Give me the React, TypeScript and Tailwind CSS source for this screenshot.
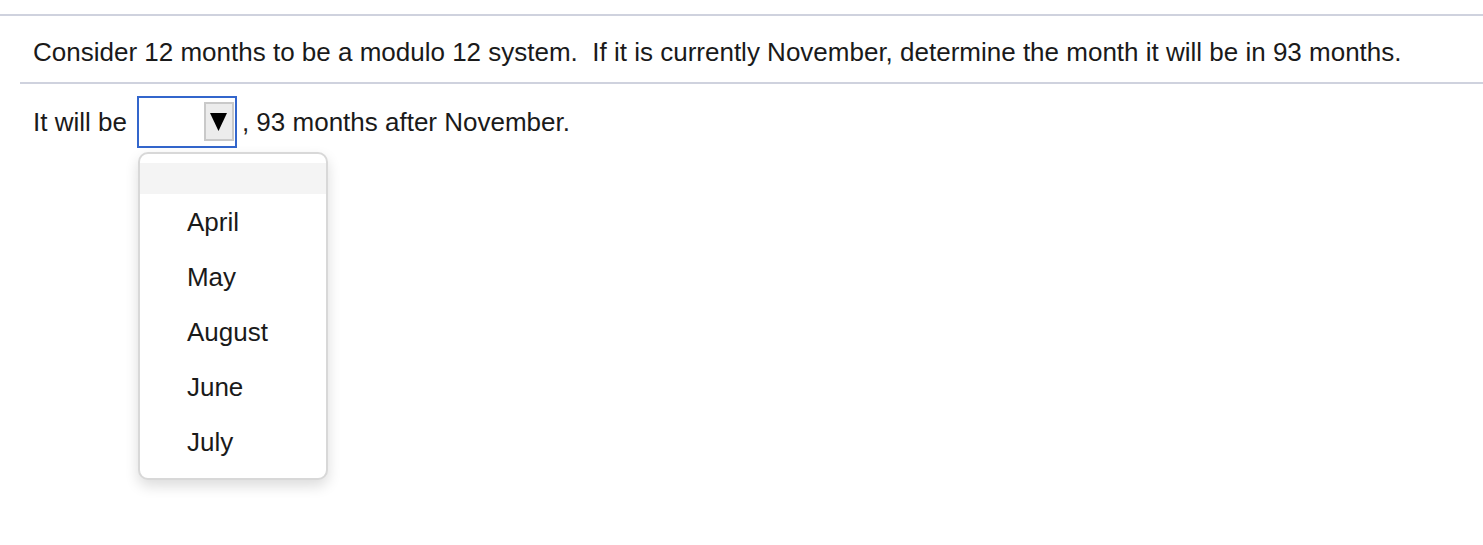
import React from "react";

export default function App() {
  const items = ["April", "May", "August", "June", "July"];
  return (
    <div
      className="w-[1483px] h-[545px] bg-white text-[#1a1a1a] overflow-hidden"
      style={{ fontFamily: '"Liberation Sans", Arial, sans-serif' }}
    >
      <div className="pt-[14px]">
        <div className="h-[2px] bg-[#cfd2de]" />
        <div className="ml-[20px] pt-[21px] pb-[15px] pl-[13px] border-b-2 border-[#cfd2de] text-[26px] leading-[30px]">
          Consider 12 months to be a modulo 12 system.&nbsp; If it is currently November, determine the month it will be in 93 months.
        </div>
        <div className="pl-[33px] pt-[12px] flex items-center text-[26px] leading-[30px]">
          <span>It will be</span>
          <div className="relative ml-[10px]">
            <div className="w-[100px] h-[52px] border-2 border-[#3366cc] flex justify-end items-start pt-[4px] pr-[1px]">
              <div className="w-[30px] h-[39px] border-2 border-[#c9c9c9] bg-[#ececec] flex items-center justify-center">
                <svg width="17" height="18" viewBox="0 0 17 18">
                  <polygon points="0,0 17,0 8.5,18" fill="#000" />
                </svg>
              </div>
            </div>
            <div className="absolute left-[1px] top-[56px] w-[190px] h-[328px] bg-white border-2 border-[#d8d8d8] rounded-[10px] shadow-[0_6px_14px_rgba(0,0,0,0.14)] pt-[9px] z-10">
              <div className="h-[31px] bg-[#f4f4f4]" />
              {items.map((m) => (
                <div key={m} className="h-[55px] flex items-center pl-[47px] text-[26px]">
                  {m}
                </div>
              ))}
            </div>
          </div>
          <span className="ml-[5px]">, 93 months after November.</span>
        </div>
      </div>
    </div>
  );
}
